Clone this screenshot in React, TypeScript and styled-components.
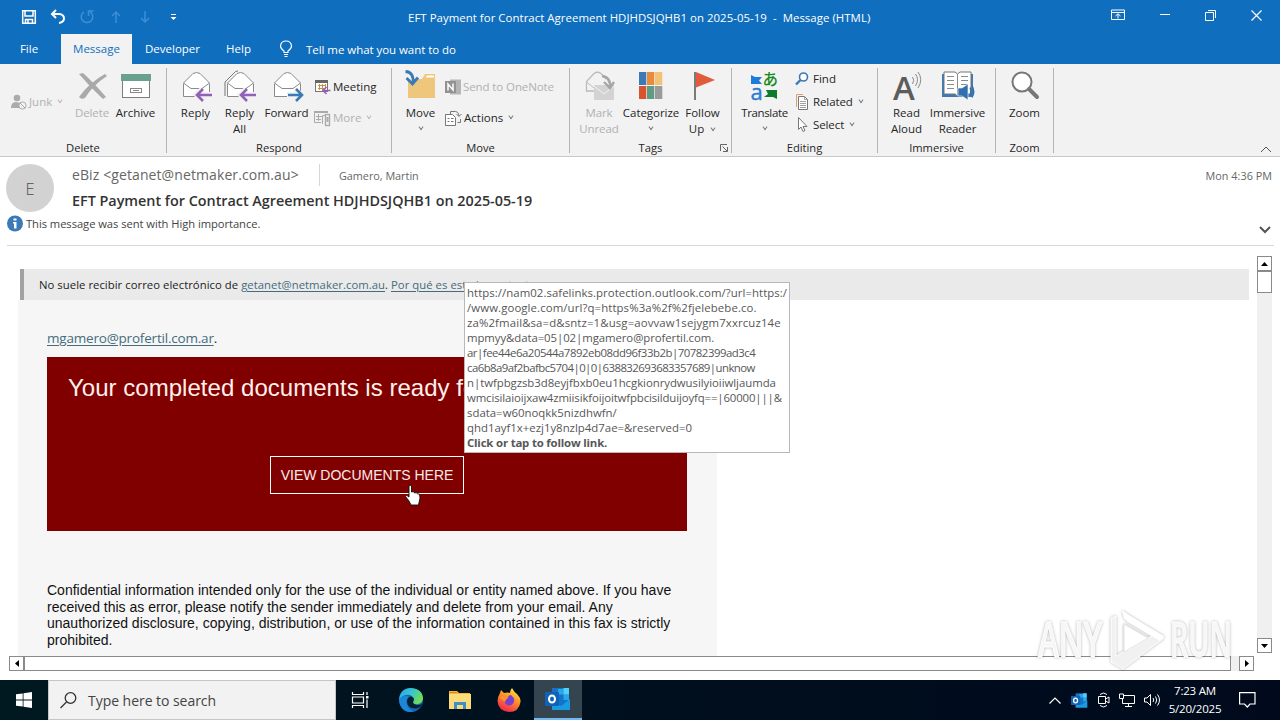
import type { ReactNode } from "react";
import styled, { createGlobalStyle } from "styled-components";

const GlobalStyle = createGlobalStyle`
  * {
    box-sizing: border-box;
  }
  body {
    margin: 0;
    overflow: hidden;
    background: #fff;
    font-family: "Open Sans", "Noto Sans", sans-serif;
    font-size: 11.5px;
    color: #262626;
  }
  svg {
    overflow: visible;
  }
`;

const Screen = styled.div`
  width: 1280px;
  height: 720px;
  display: flex;
  flex-direction: column;
  position: relative;
  overflow: hidden;
  white-space: nowrap;
`;

/* ---------- title bar ---------- */

const TitleBar = styled.header`
  height: 34px;
  display: flex;
  background: #106ebe;
  color: #fff;
`;
const QuickAccess = styled.div`
  width: 408px;
  padding-left: 14px;
  display: flex;
`;
const QuickButton = styled.div<{ $dim?: boolean }>`
  width: 29px;
  height: 34px;
  display: flex;
  align-items: center;
  justify-content: center;
  color: ${(props) => (props.$dim ? "#3b8fd6" : "#fff")};
`;
const WindowTitle = styled.div`
  flex: 1;
  line-height: 35px;
  font-size: 11.4px;
  letter-spacing: 0.05px;
  white-space: pre;
`;
const WindowButtons = styled.div`
  display: flex;
  width: 187px;
`;
const WindowButton = styled.div<{ $width?: number }>`
  width: ${(props) => props.$width ?? 46}px;
  height: 30px;
  display: flex;
  align-items: center;
  justify-content: center;
`;

/* ---------- tabs ---------- */

const TabBar = styled.nav`
  height: 30px;
  display: flex;
  background: #106ebe;
  color: #fff;
`;
const Tab = styled.div<{ $width: number; $active?: boolean; $shift?: number }>`
  width: ${(props) => props.$width}px;
  padding-right: ${(props) => props.$shift ?? 0}px;
  text-align: center;
  line-height: 30px;
  font-size: 11.5px;
  background: ${(props) => (props.$active ? "#f2f2f2" : "transparent")};
  color: ${(props) => (props.$active ? "#106ebe" : "#fff")};
`;
const TellMe = styled.div`
  display: flex;
  align-items: center;
  gap: 13px;
  padding-left: 15px;
  letter-spacing: -0.05px;
`;

/* ---------- ribbon ---------- */

const Ribbon = styled.section`
  height: 93px;
  display: flex;
  align-items: stretch;
  background: #f2f2f2;
  border-bottom: 1px solid #c8c8c8;
`;
const GroupBox = styled.div<{ $width: number }>`
  width: ${(props) => props.$width}px;
  display: flex;
  flex-direction: column;
  margin: 4px 0 3px;
  border-right: 1px solid #b4b4b4;
`;
const GroupBody = styled.div<{ $pad: number }>`
  display: flex;
  flex-shrink: 0;
  height: 74px;
  padding-left: ${(props) => props.$pad}px;
`;
const GroupLabel = styled.div`
  display: flex;
  justify-content: center;
  line-height: 11px;
  font-size: 11.2px;
`;
const Launcher = styled.svg`
  position: absolute;
  left: 720px;
  top: 144px;
`;
const BigBox = styled.div<{ $width: number; $dim?: boolean; $spacing?: number }>`
  width: ${(props) => props.$width}px;
  padding-top: 2px;
  display: flex;
  flex-direction: column;
  align-items: center;
  line-height: 16px;
  letter-spacing: ${(props) => props.$spacing ?? 0}px;
  color: ${(props) => (props.$dim ? "#b1b1b1" : "#262626")};
  svg {
    flex-shrink: 0;
  }
`;
const BigIcon = styled.div`
  height: 32px;
  margin-bottom: 3px;
  letter-spacing: 0;
`;
const Caret = styled.i`
  display: inline-block;
  width: 4px;
  height: 4px;
  margin: 0 1px 3px 4px;
  border: solid #777;
  border-width: 0 1.3px 1.3px 0;
  transform: rotate(45deg) skew(8deg, 8deg);
`;
const LoneCaret = styled(Caret)`
  margin: 4px 0 0;
`;
const SmallColumn = styled.div<{ $top: number; $pad?: number }>`
  display: flex;
  flex-direction: column;
  margin-top: ${(props) => props.$top}px;
  padding-left: ${(props) => props.$pad ?? 3}px;
`;
const SmallRow = styled.div<{ $height: number; $dim?: boolean; $spacing?: number }>`
  height: ${(props) => props.$height}px;
  display: flex;
  align-items: center;
  gap: 2px;
  letter-spacing: ${(props) => props.$spacing ?? 0}px;
  color: ${(props) => (props.$dim ? "#b1b1b1" : "#262626")};
  ${Caret} {
    border-color: ${(props) => (props.$dim ? "#b9b9b9" : "#777")};
  }
`;
const Collapse = styled.div`
  flex: 1;
  display: flex;
  align-items: flex-end;
  justify-content: flex-end;
  padding: 0 8px 3px 0;
`;

/* ---------- message header ---------- */

const MessageHeader = styled.section`
  height: 88px;
  display: flex;
  flex-direction: column;
  padding: 7px 6px 0;
`;
const HeaderTop = styled.div`
  display: flex;
  height: 48px;
`;
const Avatar = styled.div`
  width: 48px;
  height: 48px;
  border-radius: 50%;
  background: #d2d2d2;
  color: #505050;
  font-size: 16.5px;
  font-weight: 300;
  line-height: 49px;
  text-align: center;
`;
const HeaderText = styled.div`
  flex: 1;
  padding-left: 18px;
`;
const FromLine = styled.div`
  display: flex;
  height: 24px;
  color: #666;
`;
const Sender = styled.div`
  width: 248px;
  height: 22px;
  font-size: 14px;
  line-height: 22px;
  letter-spacing: 0.1px;
  border-right: 1px solid #d6d6d6;
`;
const Recipient = styled.div`
  flex: 1;
  padding-left: 19px;
  font-size: 10.8px;
  line-height: 24px;
`;
const ReceivedAt = styled.div`
  padding-right: 2px;
  font-size: 10.8px;
  line-height: 24px;
  letter-spacing: 0.04px;
`;
const Subject = styled.h1`
  margin: 0;
  font-size: 14.4px;
  font-weight: 600;
  line-height: 26px;
  letter-spacing: -0.02px;
  color: #333;
`;
const InfoLine = styled.div`
  display: flex;
  align-items: center;
  height: 23px;
  padding-left: 1px;
  gap: 2px;
  font-size: 11.2px;
  letter-spacing: -0.05px;
  color: #444;
`;
const ExpandIcon = styled.svg`
  margin: 13px 3px 0 auto;
`;

/* ---------- mail body ---------- */

const MailPane = styled.main`
  height: 435px;
  display: flex;
  flex-direction: column;
  position: relative;
`;
const Divider = styled.div`
  height: 1px;
  margin: 0 6px 0 7px;
  background: #d9d9d9;
`;
const MailRow = styled.div`
  display: flex;
  height: 410px;
`;
const MailContent = styled.div`
  width: 1257px;
  padding: 23px 8px 0 18px;
  display: flex;
  flex-direction: column;
`;
const SafetyBanner = styled.div`
  height: 31px;
  margin-left: 2px;
  padding-left: 15px;
  border-left: 4px solid #a2a2a2;
  background: #eaeaea;
  line-height: 31px;
  font-size: 11.3px;
  letter-spacing: 0.04px;
  color: #222;
`;
const Link = styled.a`
  color: #456c7c;
  text-decoration: underline;
  text-underline-offset: 2px;
`;
const Letter = styled.article`
  width: 699px;
  flex: 1;
  padding: 27px 30px 0 29px;
  background: #f6f6f6;
`;
const Addressee = styled.div`
  height: 30px;
  line-height: 23px;
  font-size: 13.5px;
  letter-spacing: -0.2px;
`;
const RedCard = styled.div`
  height: 174px;
  width: 640px;
  padding: 15px 21px 0;
  background: #800000;
  color: #fff;
  font-family: "Liberation Sans", Arial, sans-serif;
  overflow: hidden;
`;
const CardTitle = styled.h2`
  margin: 0 0 52px;
  font-size: 24px;
  font-weight: 400;
  line-height: 32px;
  letter-spacing: 0.03px;
  color: #fff0ec;
`;
const ViewButton = styled.a`
  display: block;
  width: 194px;
  height: 38px;
  margin-left: 202px;
  border: 1px solid #fff;
  color: #fbe9e9;
  font-size: 14px;
  line-height: 37px;
  text-align: center;
`;
const FinePrint = styled.p`
  margin: 51px 0 0;
  font-family: "Liberation Sans", Arial, sans-serif;
  font-size: 14px;
  line-height: 16.6px;
  color: #111;
`;
const PrintLine = styled.span`
  display: block;
`;

const VerticalBar = styled.div`
  width: 15px;
  height: 397px;
  margin-top: 10px;
  display: flex;
  flex-direction: column;
  background: #f0f0f0;
`;
const HorizontalBar = styled.div`
  width: 1245px;
  height: 15px;
  margin-left: 9px;
  display: flex;
  background: #f0f0f0;
`;
const ArrowButton = styled.div`
  width: 15px;
  height: 15px;
  display: flex;
  align-items: center;
  justify-content: center;
  background: #fff;
  border: 1px solid #8a8a8a;
`;
const Thumb = styled.div<{ $width: number; $height: number }>`
  width: ${(props) => props.$width}px;
  height: ${(props) => props.$height}px;
  background: #fff;
  border: 1px solid #8a8a8a;
`;
const Spacer = styled.div`
  flex: 1;
`;

const LinkTip = styled.div`
  position: absolute;
  left: 464px;
  top: 282px;
  width: 326px;
  height: 171px;
  padding: 2px;
  border: 1px solid #b8b8b8;
  background: #fff;
  font-size: 11.4px;
  line-height: 15px;
  color: #575757;
`;
const TipLine = styled.div<{ $spacing?: number; $bold?: boolean }>`
  letter-spacing: ${(props) => props.$spacing ?? 0}px;
  font-weight: ${(props) => (props.$bold ? 700 : 400)};
`;
const Cursor = styled.svg`
  position: absolute;
  left: 404px;
  top: 484px;
`;
const Watermark = styled.svg`
  position: absolute;
  left: 1030px;
  top: 602px;
  filter: drop-shadow(0 0 1.5px rgba(0, 0, 0, 0.3));
`;

/* ---------- taskbar ---------- */

const Taskbar = styled.footer`
  height: 40px;
  display: flex;
  background: linear-gradient(90deg, #001820 0%, #000f1e 50%, #000a1c 100%);
  color: #fff;
`;
const TaskButton = styled.div<{ $width?: number; $active?: boolean }>`
  width: ${(props) => props.$width ?? 49}px;
  height: 40px;
  display: flex;
  align-items: center;
  justify-content: center;
  background: ${(props) => (props.$active ? "#35454f" : "transparent")};
  border-bottom: ${(props) => (props.$active ? "2px solid #76b9ed" : "none")};
`;
const SearchBox = styled.div`
  width: 288px;
  height: 40px;
  display: flex;
  align-items: center;
  gap: 11px;
  padding-left: 11px;
  background: #f2f2f2;
  border: 1px solid #c6c6c6;
  color: #444;
  font-size: 14px;
  letter-spacing: -0.04px;
`;
const Tray = styled.div`
  width: 231px;
  margin-left: auto;
  display: flex;
  align-items: center;
`;
const TrayIcon = styled.div<{ $width: number }>`
  width: ${(props) => props.$width}px;
  display: flex;
  justify-content: center;
`;
const Clock = styled.div`
  width: 64px;
  margin-right: 2px;
  text-align: center;
  font-size: 11.5px;
  line-height: 18px;
  letter-spacing: -0.2px;
`;

/* ---------- icons ---------- */

const MailShape = () => (
  <>
    <path d="M3.5 13.5 V26.5 H29.5 V13.5" fill="#fff" stroke="#8a8a8a" />
    <path d="M3.5 13 L13 3.5 Q16.5 1.500 20 3.500 L29.500 13 L22 18.500 H11 Z" fill="#fff" stroke="#8a8a8a" />
  </>
);

const ReplyIcon = ({ all }: { all?: boolean }) => (
  <svg width="32" height="32" viewBox="0 0 32 32">
    {all && <path d="M1 26 V12 L11.500 1.500 L14 1" fill="none" stroke="#777" />}
    <MailShape />
    <path d="M31 24.500 H16 M22 19 L16 24.500 L22 30" fill="none" stroke="#f2f2f2" strokeWidth="5" />
    <path d="M32 25 H17 M23 19 L17 25 L23 31" fill="none" stroke="#9163b8" strokeWidth="2.600" />
  </svg>
);

const ForwardIcon = () => (
  <svg width="32" height="32" viewBox="0 0 32 32">
    <MailShape />
    <path d="M16 24.500 H30 M24 19 L30 24.500 L24 30" fill="none" stroke="#f2f2f2" strokeWidth="5" />
    <path d="M17 25 H31 M25 19 L31 25 L25 31" fill="none" stroke="#3b79b7" strokeWidth="2.600" />
  </svg>
);

const DeleteIcon = () => (
  <svg width="32" height="32" viewBox="0 0 32 32" fill="#a9a9a9">
    <path d="M3 4 L7 3 Q18 13 30 27 L27 29 Q14 17 3 4Z" />
    <path d="M29 4 L31 6 Q17 15 9 28 Q5 30 3 27 Q14 12 29 4Z" />
  </svg>
);

const ArchiveIcon = () => (
  <svg width="32" height="32" viewBox="0 0 32 32">
    <rect x="2.500" y="9.500" width="27" height="18" fill="#fff" stroke="#7d7d7d" />
    <rect x="1" y="4" width="30" height="7" fill="#6aa08e" />
    <rect x="10.500" y="18.500" width="11" height="4" fill="#fff" stroke="#8a8a8a" />
    <path d="M13 20.500 H19" stroke="#8a8a8a" />
  </svg>
);

const MoveIcon = () => (
  <svg width="32" height="32" viewBox="0 0 32 32">
    <path d="M3 28 V9 H17 L20 4 H30 V28 Z" fill="#eec77d" />
    <path d="M20.500 7.500 L22 5.500 H29 V7.500 Z" fill="#fff" />
    <path d="M1 1.500 Q8.500 2 8 13" fill="none" stroke="#f2f2f2" strokeWidth="5" />
    <path d="M0.500 1.500 Q9 2 8 13 M1.500 8 L7.500 14 L13 7.500" fill="none" stroke="#3b79b7" strokeWidth="2.800" />
  </svg>
);

const UnreadIcon = () => (
  <svg width="32" height="32" viewBox="0 0 32 32">
    <path d="M11 21 H3.500 V11.500 L11 3.500 Q14.500 1 18 3.500 L23 9" fill="none" stroke="#bcbcbc" strokeWidth="1.300" />
    <path d="M3.500 12 L11 18" stroke="#bcbcbc" />
    <rect x="11" y="15" width="20" height="15" fill="#d3d3d3" />
    <path d="M11 16 L21 24 L31 16" fill="none" stroke="#f2f2f2" />
    <path d="M19 6 Q28 7 27 18 M21 12 L27 18 L31 12" fill="none" stroke="#a6a6a6" strokeWidth="2.400" />
  </svg>
);

const categories = ["#3b79b7", "#ea8a3c", "#f0c377", "#d9532f", "#5f9c84", "#9a9a9a"];
const CategorizeIcon = () => (
  <svg width="32" height="32" viewBox="0 0 32 32">
    {categories.map((color, i) => (
      <rect key={color} x={4 + (i % 3) * 8} y={i < 3 ? 2 : 16} width="7.300" height="13" fill={color} />
    ))}
  </svg>
);

const FlagIcon = () => (
  <svg width="32" height="32" viewBox="0 0 32 32">
    <path d="M9 2 L28 10 L9 17.500Z" fill="#e25c3b" />
    <path d="M8 2 V30" stroke="#7a7a7a" strokeWidth="2" />
  </svg>
);

const TranslateIcon = () => (
  <svg width="32" height="32" viewBox="0 0 32 32">
    <text x="13.500" y="15" fontSize="15.500" fontWeight="500" fontFamily="Noto Sans CJK JP, sans-serif" fill="#168a1a">あ</text>
    <text x="1.500" y="30" fontSize="22" fontFamily="Open Sans, sans-serif" fill="#2b7cd3" stroke="#2b7cd3" strokeWidth="0.400">a</text>
    <path d="M2 5 L6 7 H13 L10 10.500 L13 14 H2Z" fill="#1b7cdb" />
    <path d="M17 20 H28 V29 L24 27 H15 L19 24Z" fill="#0d7a2e" />
  </svg>
);

const ReadAloudIcon = () => (
  <svg width="32" height="32" viewBox="0 0 32 32">
    <text x="2" y="30" fontSize="33" fontWeight="600" fontFamily="Open Sans, sans-serif" fill="#5c5c5c">A</text>
    <path d="M21.500 7 Q24 10 21.500 14 M24.500 4 Q28.500 9.500 24.500 16 M27 2 Q32.500 9.500 27 18" fill="none" stroke="#8a8a8a" />
  </svg>
);

const ReaderIcon = () => (
  <svg width="32" height="32" viewBox="0 0 32 32">
    <path d="M0 4 H31 V27 H0Z" fill="#3b79b7" />
    <path d="M2 2 H13 L15.500 4 L18 2 H29 V24 H18 L15.500 26 L13 24 H2Z" fill="#fff" stroke="#777" />
    <path d="M15.500 4 V26 M5 6.500 H12 M5 10.500 H12 M5 14.500 H12 M5 18.500 H12 M19 6.500 H26 M19 10.500 H26 M19 14.500 H26" stroke="#8a8a8a" />
    <path d="M16 18 H20 L26 14 V30 L20 26 H16Z" fill="#2f6fae" stroke="#fff" strokeWidth="0.600" />
    <path d="M28 17.500 Q30 21.500 28 25.500 M30 15.500 Q33.500 21.500 30 27.500" fill="none" stroke="#2f6fae" strokeWidth="1.300" />
  </svg>
);

const ZoomIcon = () => (
  <svg width="32" height="32" viewBox="0 0 32 32">
    <circle cx="13" cy="12" r="9.500" fill="#fff" stroke="#777" strokeWidth="2" />
    <path d="M20 19 L28 27" stroke="#777" strokeWidth="4" strokeLinecap="round" />
  </svg>
);

const JunkIcon = () => (
  <svg width="16" height="16" viewBox="0 0 16 16">
    <circle cx="6" cy="4" r="3.300" fill="#ababab" />
    <path d="M0 14 Q0 8 5 8 L9 9 L8 14Z" fill="#ababab" />
    <circle cx="11.500" cy="11.500" r="3.600" fill="#f2f2f2" stroke="#ababab" />
    <path d="M9 9 L14 14" stroke="#ababab" />
  </svg>
);

const MeetingIcon = () => (
  <svg width="17" height="16" viewBox="0 0 17 16">
    <rect x="1.500" y="1.500" width="12" height="11" fill="#fff" stroke="#777" />
    <rect x="1" y="1" width="13" height="3" fill="#666" />
    <path d="M4 6.500 H12 M4 9.500 H10 M5.500 5 V11 M8.500 5 V11 M11.500 5 V9" stroke="#d08a4a" />
    <path d="M16.500 11.500 H9.500 M12.500 8 L9 11.500 L12.500 15" fill="none" stroke="#9163b8" strokeWidth="1.600" />
  </svg>
);

const MoreIcon = () => (
  <svg width="17" height="16" viewBox="0 0 17 16" fill="none" stroke="#ababab">
    <path d="M7 12.500 H0.500 V1.500 H13" />
    <path d="M0 2 H14" strokeWidth="2" />
    <path d="M2 6.500 H8 M2 9.500 H7 M4.500 4 V11" />
    <path d="M8.500 14 V5.500 H11" />
    <rect x="11.500" y="4.500" width="4" height="11" strokeWidth="1.400" />
    <path d="M13.500 7 V12" strokeWidth="2" />
  </svg>
);

const OneNoteIcon = () => (
  <svg width="16" height="16" viewBox="0 0 16 16">
    <rect x="5" y="0.500" width="11" height="15" fill="#b5b5b5" />
    <rect x="0" y="2" width="11" height="12" fill="#929292" />
    <path d="M3 11.500 V5 L8 11 V4.500" fill="none" stroke="#fff" strokeWidth="1.500" />
  </svg>
);

const ActionsIcon = () => (
  <svg width="17" height="16" viewBox="0 0 17 16" fill="none" stroke="#777">
    <path d="M5.500 4 V1.500 H9 M12.500 12.500 H15.500 V9" />
    <path d="M8 1.500 Q13.500 0.500 14 6 M11.500 4 L14 6.500 L16.500 4" />
    <path d="M0.500 4.500 H7.500 L10.500 7.500 V15.500 H0.500Z" fill="#fff" />
    <path d="M2.500 8.500 H4.500 M2.500 11.500 H4.500 M6 8.500 H8.500 M6 11.500 H8.500" />
  </svg>
);

const FindIcon = () => (
  <svg width="16" height="16" viewBox="0 0 16 16">
    <circle cx="8.500" cy="6" r="4" fill="#fff" stroke="#3b79b7" strokeWidth="1.600" />
    <path d="M5.500 9 L1 13.500" stroke="#3b79b7" strokeWidth="2.400" />
  </svg>
);

const RelatedIcon = () => (
  <svg width="16" height="16" viewBox="0 0 16 16">
    <path d="M1.500 13 V0.500 H8" fill="none" stroke="#e0a070" />
    <path d="M3.500 2.500 H9.500 L12.500 5.500 V15.500 H3.500Z" fill="#fff" stroke="#777" />
    <path d="M5 7.500 H11 M5 9.500 H11 M5 11.500 H11 M5 13.500 H11 M9.500 3 V5.500 H12" fill="none" stroke="#888" strokeWidth="0.800" />
  </svg>
);

const SelectIcon = () => (
  <svg width="16" height="16" viewBox="0 0 16 16">
    <path d="M3.500 0.500 V12.500 L6 10 L8 14.500 L10 13.500 L8 9.500 H12Z" fill="#fff" stroke="#777" />
  </svg>
);

const OutlookIcon = ({ size }: { size: number }) => (
  <svg width={size} height={size} viewBox="0 0 26 26">
    <path d="M7 2 H24 V20 H7Z" fill="#1473c8" />
    <path d="M13 3 H18.500 V8.500 H13Z M18.500 8.500 H24 V14 H18.500Z" fill="#28a8ea" />
    <path d="M18.500 2 H24 V8.500 H18.500Z" fill="#50d0ff" />
    <path d="M7 16 L16 20 L25 13 V24 H7Z" fill="#1a9be0" />
    <rect x="0" y="6" width="14" height="14" rx="1" fill="#0f62b5" />
    <ellipse cx="7" cy="13" rx="3" ry="3.500" fill="none" stroke="#fff" strokeWidth="2" />
  </svg>
);

const EdgeIcon = () => (
  <svg width="26" height="26" viewBox="0 0 26 26">
    <defs>
      <linearGradient id="edgeTop" x1="0" x2="1" y1="0" y2="0.400">
        <stop offset="0" stopColor="#2a9fe8" />
        <stop offset="0.500" stopColor="#33c4d6" />
        <stop offset="1" stopColor="#6cdc5a" />
      </linearGradient>
    </defs>
    <circle cx="13" cy="13" r="12" fill="#1565b8" />
    <path d="M1 13 Q2 1 13 1 Q25 2 25 12 Q24 18 17 17 Q14 16 15.500 14 Q17 10 12 8 Q5 7 1 13Z" fill="url(#edgeTop)" />
    <path d="M9 15 Q9 10 13 9.500 Q17 11 15.500 14 Q14 16 17 17.500 Q21 19 24 16.500 Q23 21 18 21.500 Q10 22 9 15Z" fill="#06202e" />
    <path d="M1 13 Q5 7.500 11 9.500 Q7 12 9 18 Q11 23 16 24.500 Q3 27 1 13Z" fill="#1a87d8" />
  </svg>
);

const FolderIcon = () => (
  <svg width="24" height="22" viewBox="0 0 24 22">
    <path d="M1 2 H9 L11 4 H22 V19 H1Z" fill="#f5b73b" />
    <path d="M1 5 H23 V20 H1Z" fill="#fcdc78" />
    <path d="M6 20 V13 H18 V20 H15 V16 H9 V20Z" fill="#3f8fca" />
    <path d="M2 3 H9 V4 H2Z" fill="#d78a1c" />
  </svg>
);

const FirefoxIcon = () => (
  <svg width="26" height="26" viewBox="0 0 26 26">
    <defs>
      <linearGradient id="fox" x1="0.800" x2="0.300" y1="0" y2="1">
        <stop offset="0" stopColor="#fff04a" />
        <stop offset="0.400" stopColor="#ff9a2a" />
        <stop offset="1" stopColor="#f0204e" />
      </linearGradient>
    </defs>
    <path d="M4 6 L5 3 L8 6 Q12 5 14 6 Q14 3 16 1 Q18 5 21 7 Q25 11 24.500 15 Q23 25 13 25 Q2 24 1.500 14 Q2 9 4 6Z" fill="url(#fox)" />
    <path d="M8 10 L12 11 Q12 8 15 8 Q19 11 18 15 Q16 19 12 18.500 Q8 17 8.500 13Z" fill="#7a3fd0" />
    <path d="M3 10 Q8 8 12 11 Q9 13 9 15 Q6 12 3 10Z" fill="#ff9324" />
  </svg>
);

/* ---------- pieces ---------- */

type GroupProps = { width: number; label: string; pad?: number; children: ReactNode };
const Group = ({ width, label, pad = 7, children }: GroupProps) => (
  <GroupBox $width={width}>
    <GroupBody $pad={pad}>{children}</GroupBody>
    <GroupLabel>{label}</GroupLabel>
  </GroupBox>
);

type BigProps = {
  width: number;
  icon: ReactNode;
  lines: ReactNode[];
  dim?: boolean;
  caret?: boolean;
  spacing?: number;
};
const BigButton = ({ width, icon, lines, dim, caret, spacing }: BigProps) => (
  <BigBox $width={width} $dim={dim} $spacing={spacing}>
    <BigIcon>{icon}</BigIcon>
    {lines.map((line, i) => (
      <span key={i}>{line}</span>
    ))}
    {caret && <LoneCaret />}
  </BigBox>
);

const tipLines: [string, number][] = [
  ["https://nam02.safelinks.protection.outlook.com/?url=https:/", 0.05],
  ["/www.google.com/url?q=https%3a%2f%2fjelebebe.co.", 0.1],
  ["za%2fmail&sa=d&sntz=1&usg=aovvaw1sejygm7xxrcuz14e", 0.12],
  ["mpmyy&data=05|02|mgamero@profertil.com.", -0.08],
  ["ar|fee44e6a20544a7892eb08dd96f33b2b|70782399ad3c4", -0.48],
  ["ca6b8a9af2bafbc5704|0|0|638832693683357689|unknow", -0.55],
  ["n|twfpbgzsb3d8eyjfbxb0eu1hcgkionrydwusilyioiiwljaumda", -0.05],
  ["wmcisilaioijxaw4zmiisikfoijoitwfpbcisilduijoyfq==|60000|||&", -0.13],
  ["sdata=w60noqkk5nizdhwfn/", 0],
  ["qhd1ayf1x+ezj1y8nzlp4d7ae=&reserved=0", 0],
];

const finePrint = [
  "Confidential information intended only for the use of the individual or entity named above. If you have",
  "received this as error, please notify the sender immediately and delete from your email. Any",
  "unauthorized disclosure, copying, distribution, or use of the information contained in this fax is strictly",
  "prohibited.",
];

const App = () => (
  <Screen>
    <GlobalStyle />
    <TitleBar>
      <QuickAccess>
        <QuickButton>
          <svg width="16" height="16" viewBox="0 0 16 16" fill="none" stroke="currentColor" strokeWidth="1.500">
            <path d="M1.700 1.700 H14.300 V14.300 H1.700Z M4 2 V7 H12 V2 M4.500 14 V10.500 H11.500 V14 M7 11 V14" />
          </svg>
        </QuickButton>
        <QuickButton>
          <svg width="16" height="16" viewBox="0 0 16 16" fill="none" stroke="currentColor" strokeWidth="2">
            <path d="M6 1 L2 5 L6 9 M2 5 H9 Q14 5.500 14 9.500 Q14 13 9 14" />
          </svg>
        </QuickButton>
        <QuickButton $dim>
          <svg width="16" height="16" viewBox="0 0 16 16" fill="none" stroke="currentColor" strokeWidth="1.500">
            <path d="M5 2.800 A5.800 5.800 0 1 0 11 2.800 M9.500 7 V2 H14.500" />
          </svg>
        </QuickButton>
        <QuickButton $dim>
          <svg width="14" height="14" viewBox="0 0 14 14" fill="none" stroke="currentColor" strokeWidth="1.500">
            <path d="M7 13 V2 M3 6 L7 2 L11 6" />
          </svg>
        </QuickButton>
        <QuickButton $dim>
          <svg width="14" height="14" viewBox="0 0 14 14" fill="none" stroke="currentColor" strokeWidth="1.500">
            <path d="M7 1 V12 M3 8 L7 12 L11 8" />
          </svg>
        </QuickButton>
        <QuickButton>
          <svg width="7" height="8" viewBox="0 0 7 8" fill="#fff">
            <path d="M1 1 H6 V2 H1Z M0.500 4 H6.500 L3.500 7Z" />
          </svg>
        </QuickButton>
      </QuickAccess>
      <WindowTitle>{"EFT Payment for Contract Agreement HDJHDSJQHB1 on 2025-05-19  -  Message (HTML)"}</WindowTitle>
      <WindowButtons>
        <WindowButton $width={49}>
          <svg width="14" height="12" viewBox="0 0 14 12" fill="none" stroke="#fff">
            <path d="M0.500 1 H13.500 V10.500 H0.500Z M0.500 3.500 H13.500 M7 9.500 V5 M4.500 7 L7 4.800 L9.500 7" />
          </svg>
        </WindowButton>
        <WindowButton $width={45}>
          <svg width="10" height="10" viewBox="0 0 10 10">
            <path d="M0 4.500 H10" stroke="#fff" />
          </svg>
        </WindowButton>
        <WindowButton>
          <svg width="11" height="11" viewBox="0 0 11 11" fill="none" stroke="#fff">
            <path d="M0.500 2.500 H8.500 V10.500 H0.500Z M3 0.500 H10.500 V8" />
          </svg>
        </WindowButton>
        <WindowButton>
          <svg width="11" height="11" viewBox="0 0 11 11" stroke="#fff" strokeWidth="1.200">
            <path d="M0.500 0.500 L10.500 10.500 M10.500 0.500 L0.500 10.500" />
          </svg>
        </WindowButton>
      </WindowButtons>
    </TitleBar>

    <TabBar>
      <Tab $width={61} $shift={3}>File</Tab>
      <Tab $width={71} $active>Message</Tab>
      <Tab $width={81}>Developer</Tab>
      <Tab $width={51}>Help</Tab>
      <TellMe>
        <svg width="14" height="18" viewBox="0 0 14 18" fill="none" stroke="#fff" strokeWidth="1.200">
          <path d="M5 12.500 V11 Q1.500 8.500 1.500 6 Q2 1 7 1 Q12 1 12.500 6 Q12.500 8.500 9 11 V12.500Z M5 14.500 H9 M5.500 16.500 H8.500" />
        </svg>
        Tell me what you want to do
      </TellMe>
    </TabBar>

    <Ribbon>
      <Group width={167} label="Delete" pad={11}>
        <SmallColumn $top={18} $pad={0}>
          <SmallRow $height={31} $dim>
            <JunkIcon />
            Junk
            <Caret />
          </SmallRow>
        </SmallColumn>
        <Spacer />
        <BigButton width={42} icon={<DeleteIcon />} lines={["Delete"]} dim spacing={-0.1} />
        <BigButton width={45} icon={<ArchiveIcon />} lines={["Archive"]} />
        <SmallColumn $top={0} $pad={8} />
      </Group>
      <Group width={225} label="Respond">
        <BigButton width={43} icon={<ReplyIcon />} lines={["Reply"]} />
        <BigButton width={45} icon={<ReplyIcon all />} lines={["Reply", "All"]} />
        <BigButton width={49} icon={<ForwardIcon />} lines={["Forward"]} spacing={-0.1} />
        <SmallColumn $top={3}>
          <SmallRow $height={31}>
            <MeetingIcon />
            Meeting
          </SmallRow>
          <SmallRow $height={31} $dim>
            <MoreIcon />
            More
            <Caret />
          </SmallRow>
        </SmallColumn>
      </Group>
      <Group width={178} label="Move">
        <BigButton width={43} icon={<MoveIcon />} lines={["Move"]} caret />
        <SmallColumn $top={3}>
          <SmallRow $height={31} $dim $spacing={-0.1}>
            <OneNoteIcon />
            Send to OneNote
          </SmallRow>
          <SmallRow $height={31}>
            <ActionsIcon />
            Actions
            <Caret />
          </SmallRow>
        </SmallColumn>
      </Group>
      <Group width={162} label="Tags" pad={6}>
        <BigButton width={46} icon={<UnreadIcon />} lines={["Mark", "Unread"]} dim spacing={-0.1} />
        <BigButton width={58} icon={<CategorizeIcon />} lines={["Categorize"]} caret spacing={-0.05} />
        <BigButton width={45} icon={<FlagIcon />} lines={["Follow", <>Up <Caret /></>]} />
      </Group>
      <Group width={146} label="Editing">
        <BigButton width={51} icon={<TranslateIcon />} lines={["Translate"]} caret spacing={-0.35} />
        <SmallColumn $top={-1} $pad={5}>
          <SmallRow $height={23}>
            <FindIcon />
            Find
          </SmallRow>
          <SmallRow $height={23} $spacing={-0.1}>
            <RelatedIcon />
            Related
            <Caret />
          </SmallRow>
          <SmallRow $height={23} $spacing={-0.1}>
            <SelectIcon />
            Select
            <Caret />
          </SmallRow>
        </SmallColumn>
      </Group>
      <Group width={118} label="Immersive">
        <BigButton width={43} icon={<ReadAloudIcon />} lines={["Read", "Aloud"]} />
        <BigButton width={59} icon={<ReaderIcon />} lines={["Immersive", "Reader"]} spacing={-0.1} />
      </Group>
      <Group width={58} label="Zoom">
        <BigButton width={43} icon={<ZoomIcon />} lines={["Zoom"]} />
      </Group>
      <Collapse>
        <svg width="12" height="7" viewBox="0 0 12 7" fill="none" stroke="#555">
          <path d="M1 6 L6 1 L11 6" />
        </svg>
      </Collapse>
      <Launcher width="8" height="8" viewBox="0 0 8 8" fill="none" stroke="#666">
        <path d="M0.500 7 V0.500 H7 M2.500 2.500 L7 7 M7.500 3 V7.500 H3" />
      </Launcher>
    </Ribbon>

    <MessageHeader>
      <HeaderTop>
        <Avatar>E</Avatar>
        <HeaderText>
          <FromLine>
            <Sender>eBiz &lt;getanet@netmaker.com.au&gt;</Sender>
            <Recipient>Gamero, Martin</Recipient>
            <ReceivedAt>Mon 4:36 PM</ReceivedAt>
          </FromLine>
          <Subject>EFT Payment for Contract Agreement HDJHDSJQHB1 on 2025-05-19</Subject>
        </HeaderText>
      </HeaderTop>
      <InfoLine>
        <svg width="17" height="17" viewBox="0 0 17 17">
          <circle cx="8" cy="8.500" r="8" fill="#3b79b7" />
          <path d="M6.500 3.500 H9.500 V5.500 H6.500Z M6 7 H9.500 V13.500 H7 V8.500 H6Z" fill="#fff" />
        </svg>
        This message was sent with High importance.
        <ExpandIcon width="12" height="8" viewBox="0 0 12 8" fill="none" stroke="#555" strokeWidth="2">
          <path d="M1 1 L6 6 L11 1" />
        </ExpandIcon>
      </InfoLine>
    </MessageHeader>

    <MailPane>
      <Divider />
      <MailRow>
        <MailContent>
          <SafetyBanner>
            No suele recibir correo electrónico de <Link>getanet@netmaker.com.au</Link>.{" "}
            <Link>Por qué es esto importante</Link>
          </SafetyBanner>
          <Letter>
            <Addressee>
              <Link>mgamero@profertil.com.ar</Link>.
            </Addressee>
            <RedCard>
              <CardTitle>Your completed documents is ready for review</CardTitle>
              <ViewButton>VIEW DOCUMENTS HERE</ViewButton>
            </RedCard>
            <FinePrint>
              {finePrint.map((line) => (
                <PrintLine key={line}>{line}</PrintLine>
              ))}
            </FinePrint>
          </Letter>
        </MailContent>
        <VerticalBar>
          <ArrowButton>
            <svg width="7" height="4"><path d="M0 4 L3.500 0 L7 4Z" /></svg>
          </ArrowButton>
          <Thumb $width={15} $height={22} />
          <Spacer />
          <ArrowButton>
            <svg width="7" height="4"><path d="M0 0 L3.500 4 L7 0Z" /></svg>
          </ArrowButton>
        </VerticalBar>
      </MailRow>
      <HorizontalBar>
        <ArrowButton>
          <svg width="4" height="7"><path d="M4 0 L0 3.500 L4 7Z" /></svg>
        </ArrowButton>
        <Thumb $width={1207} $height={15} />
        <Spacer />
        <ArrowButton>
          <svg width="4" height="7"><path d="M0 0 L4 3.500 L0 7Z" /></svg>
        </ArrowButton>
      </HorizontalBar>
    </MailPane>

    <Taskbar>
      <TaskButton $width={48}>
        <svg width="16" height="16" viewBox="0 0 16 16" fill="#fff">
          <path d="M0 2.300 L6.700 1.400 V7.500 H0Z M7.500 1.200 L16 0 V7.500 H7.500Z M0 8.400 H6.700 V14.600 L0 13.700Z M7.500 8.400 H16 V16 L7.500 14.800Z" />
        </svg>
      </TaskButton>
      <SearchBox>
        <svg width="17" height="17" viewBox="0 0 17 17" fill="none" stroke="#333" strokeWidth="1.300">
          <circle cx="10.500" cy="6" r="5.300" />
          <path d="M6.500 10 L0.500 16" />
        </svg>
        Type here to search
      </SearchBox>
      <TaskButton>
        <svg width="17" height="16" viewBox="0 0 17 16" fill="none" stroke="#fff" strokeWidth="1.200">
          <path d="M0.500 0 V2.500 H11.500 V0 M0.500 5 H11.500 V11 H0.500Z M0.500 16 V13.500 H11.500 V16 M15 0 V3 M15 7.500 V16" />
          <rect x="14" y="4" width="2.500" height="2.500" fill="#fff" stroke="none" />
        </svg>
      </TaskButton>
      <TaskButton $width={52}><EdgeIcon /></TaskButton>
      <TaskButton $width={46}><FolderIcon /></TaskButton>
      <TaskButton $width={51}><FirefoxIcon /></TaskButton>
      <TaskButton $width={48} $active><OutlookIcon size={26} /></TaskButton>
      <Tray>
        <TrayIcon $width={12}>
          <svg width="12" height="7" viewBox="0 0 12 7" fill="none" stroke="#fff" strokeWidth="1.200">
            <path d="M0.500 6.500 L6 1 L11.500 6.500" />
          </svg>
        </TrayIcon>
        <TrayIcon $width={36}><OutlookIcon size={17} /></TrayIcon>
        <TrayIcon $width={13}>
          <svg width="12" height="16" viewBox="0 0 12 16" fill="none" stroke="#fff">
            <path d="M0.500 4.500 H7.500 V11.500 H0.500Z M7.500 7 L11 5 V11 L7.500 9 M2 2.500 Q5.500 -0.500 9 2.500 M2 13.500 Q5.500 16.500 9 13.500" />
          </svg>
        </TrayIcon>
        <TrayIcon $width={34}>
          <svg width="16" height="14" viewBox="0 0 16 14" fill="none" stroke="#fff">
            <path d="M5 2.500 H15.500 V10.500 H3.500 V6 M0.500 1 H4.500 V5.500 H0.500Z M9.500 10.500 V13 M6 13.500 H13" />
          </svg>
        </TrayIcon>
        <TrayIcon $width={16}>
          <svg width="17" height="14" viewBox="0 0 17 14" fill="none" stroke="#fff">
            <path d="M0.500 5 H3 L6.500 1.500 V12.500 L3 9 H0.500Z M9 5 Q10.500 7 9 9 M11.500 3.500 Q14 7 11.500 10.500 M13.500 1.500 Q17.500 7 13.500 12.500" />
          </svg>
        </TrayIcon>
        <TrayIcon $width={3} />
        <Clock>
          <div>7:23 AM</div>
          <div>5/20/2025</div>
        </Clock>
        <TrayIcon $width={36}>
          <svg width="17" height="16" viewBox="0 0 17 16" fill="none" stroke="#fff" strokeWidth="1.200">
            <path d="M0.600 0.600 H16 V12 H11 L8.300 15 L5.500 12 H0.600Z" />
          </svg>
        </TrayIcon>
      </Tray>
    </Taskbar>

    <LinkTip>
      {tipLines.map(([line, spacing]) => (
        <TipLine key={line} $spacing={spacing}>{line}</TipLine>
      ))}
      <TipLine $bold $spacing={-0.18}>Click or tap to follow link.</TipLine>
    </LinkTip>
    <Cursor width="18" height="22" viewBox="0 0 18 22">
      <path
        d="M5 13 V2 Q6 0.500 7.500 2 V8 L9.500 7.500 L10.500 9 L12.500 8.500 L13.500 10 L15.500 10 L16 14 L14.500 21 H7 L5 17 L1.500 12.500 Q2 10.500 5 13Z"
        fill="#fff"
        stroke="#111"
        strokeWidth="0.900"
      />
    </Cursor>
    <Watermark width="210" height="72" viewBox="0 0 210 72">
      <g fill="#f7f7f7" stroke="#fff" strokeWidth="1" fontFamily="Open Sans, sans-serif" fontWeight="600" fontSize="48">
        <text x="8" y="55" textLength="64" lengthAdjust="spacingAndGlyphs">ANY</text>
        <text x="140" y="55" textLength="62" lengthAdjust="spacingAndGlyphs">RUN</text>
      </g>
      <path d="M81 60 V16 L86 14 V54 L122 34 L97 19 V12 L92 9 L134 36 L93 67 Z" fill="#f1f1f1" stroke="#fff" />
      <path d="M92 9 L134 34 L130 39 L94 17Z" fill="#fff" />
      <path d="M94 22 L118 36 L94 50Z" fill="#fff" stroke="#e6e6e6" />
    </Watermark>
  </Screen>
);

export default App;
